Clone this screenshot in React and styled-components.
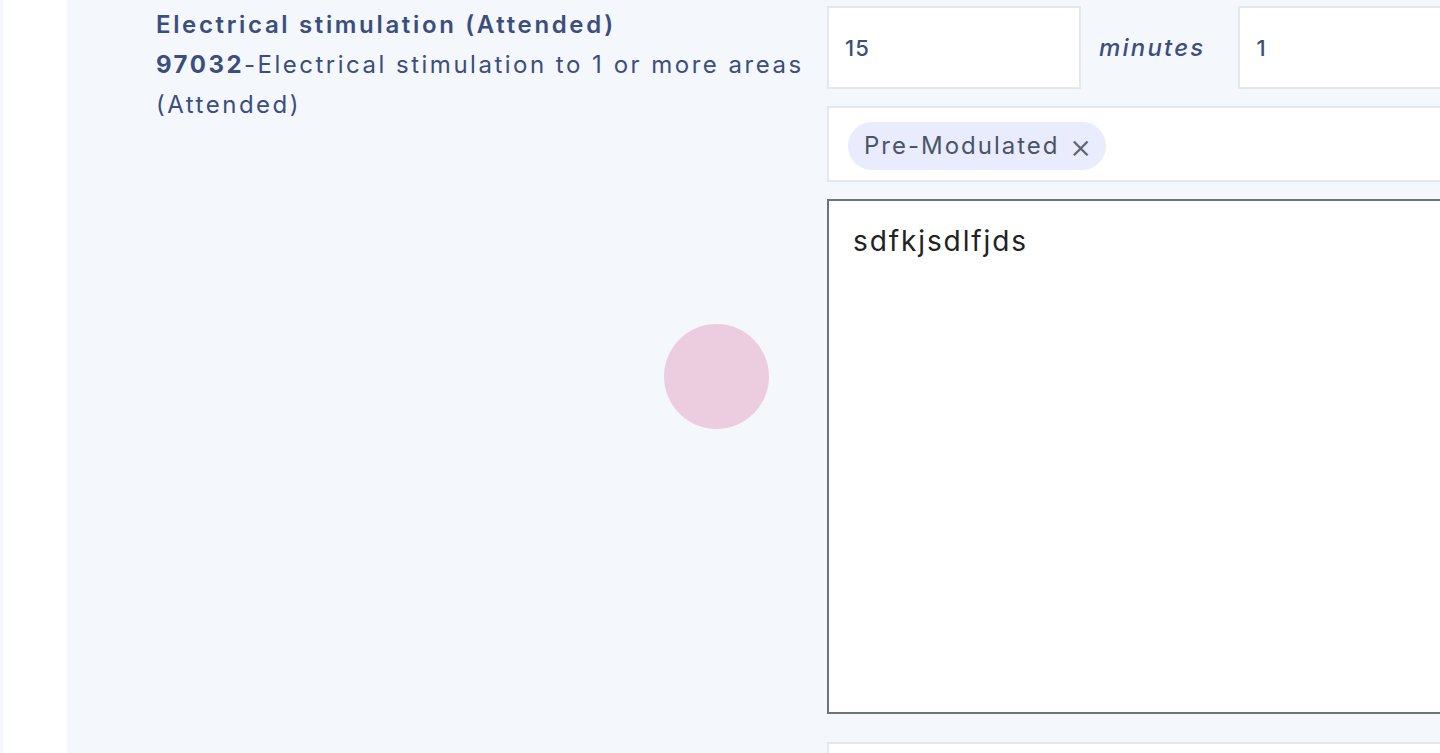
import React from "react";
import styled, { createGlobalStyle } from "styled-components";

const GlobalStyle = createGlobalStyle`
  html, body {
    margin: 0;
    padding: 0;
    height: 100%;
    overflow: hidden;
  }
  body {
    font-family: Inter, "Noto Sans", sans-serif;
    background: #ffffff;
  }
`;

const App = () => {
  return (
    <>
      <GlobalStyle />
      <Wrapper>
        <Sidebar />
        <Panel>
          <Info>
            <Title>Electrical stimulation (Attended)</Title>
            <Desc>
              <Code>97032</Code>-Electrical stimulation to 1 or more areas
              (Attended)
            </Desc>
          </Info>
          <Fields>
            <Row>
              <Input defaultValue="15" $width="254px" />
              <Unit>minutes</Unit>
              <Input defaultValue="1" $grow />
            </Row>
            <TagBox>
              <Chip>
                Pre-Modulated <Close>×</Close>
              </Chip>
            </TagBox>
            <Notes defaultValue="sdfkjsdlfjds" />
            <NextBox />
          </Fields>
          <Touch />
        </Panel>
      </Wrapper>
    </>
  );
};

const Wrapper = styled.div`
  display: flex;
  height: 753px;
  width: 1440px;
  overflow: hidden;
`;
const Sidebar = styled.div`
  width: 64px;
  flex-shrink: 0;
  background: #ffffff;
  border-left: 3px solid #f4f7fc;
`;
const Panel = styled.div`
  position: relative;
  flex: 1;
  background: #f4f7fc;
  display: flex;
  padding-left: 89px;
  overflow: hidden;
`;
const Info = styled.div`
  width: 654px;
  flex-shrink: 0;
  padding-top: 5px;
  color: #3c4e7c;
  font-size: 24px;
  line-height: 40px;
`;
const Title = styled.div`
  font-weight: 600;
  letter-spacing: 2.65px;
`;
const Desc = styled.div`
  font-weight: 400;
  letter-spacing: 2.5px;
`;
const Code = styled.span`
  font-weight: 700;
`;
const Fields = styled.div`
  margin-left: 17px;
  padding-top: 6px;
  display: flex;
  flex-direction: column;
  width: 700px;
  flex-shrink: 0;
  & > * {
    flex-shrink: 0;
  }
`;
const Row = styled.div`
  display: flex;
  align-items: center;
  height: 83px;
`;
const Input = styled.input`
  box-sizing: border-box;
  height: 83px;
  width: ${(p) => (p.$grow ? "auto" : p.$width)};
  flex: ${(p) => (p.$grow ? "1" : "none")};
  border: 2px solid #e3e7ee;
  background: #ffffff;
  padding: 0 16px;
  font-family: Inter, sans-serif;
  font-size: 22px;
  font-weight: 500;
  letter-spacing: 1px;
  color: #3c4e7c;
  outline: none;
`;
const Unit = styled.span`
  font-style: italic;
  font-weight: 500;
  font-size: 24px;
  letter-spacing: 2.2px;
  color: #3c4e7c;
  margin: 0 33px 0 18px;
`;
const TagBox = styled.div`
  box-sizing: border-box;
  margin-top: 17px;
  height: 76px;
  border: 2px solid #e3e7ee;
  background: #ffffff;
  display: flex;
  align-items: center;
  padding: 3px 0 0 19px;
`;
const Chip = styled.span`
  display: inline-flex;
  align-items: center;
  gap: 10px;
  height: 48px;
  padding: 0 14px 0 16px;
  border-radius: 24px;
  background: #e8ecfc;
  color: #4b5566;
  font-size: 24px;
  letter-spacing: 2px;
`;
const Close = styled.span`
  font-size: 34px;
  font-weight: 300;
  color: #5a6372;
  line-height: 1;
  letter-spacing: 0;
`;
const Notes = styled.textarea`
  box-sizing: border-box;
  margin-top: 17px;
  height: 515px;
  border: 2px solid #6b7280;
  background: #ffffff;
  padding: 23px 24px;
  font-family: Inter, sans-serif;
  font-size: 28px;
  letter-spacing: 1.9px;
  color: #222222;
  resize: none;
  outline: none;
`;
const NextBox = styled.div`
  margin-top: 28px;
  height: 60px;
  border: 2px solid #e3e7ee;
  background: #ffffff;
`;
const Touch = styled.div`
  position: absolute;
  left: 597px;
  top: 324px;
  width: 105px;
  height: 105px;
  border-radius: 50%;
  background: #eccde0;
`;

export default App;
